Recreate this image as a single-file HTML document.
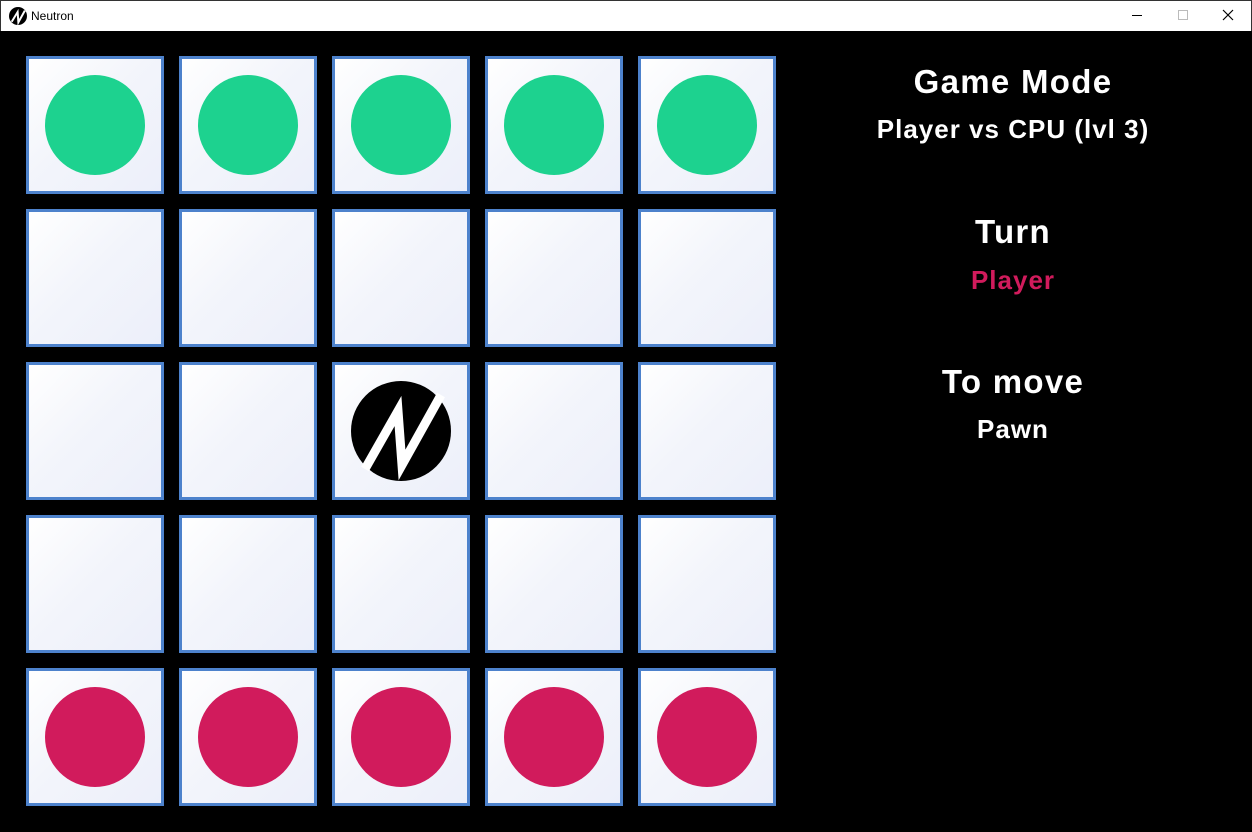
<!DOCTYPE html>
<html><head><meta charset="utf-8"><style>
*{margin:0;padding:0;box-sizing:border-box}
body{width:1252px;height:832px;background:#000;overflow:hidden;position:relative;font-family:"Liberation Sans",sans-serif}
.tb{position:absolute;left:0;top:0;width:1252px;height:31px;background:#fff;border:1px solid #333;border-bottom:none}
.tt{position:absolute;left:30px;top:8px;font-size:12px;color:#000}
.cell{position:absolute;width:138px;height:138px;border:3px solid #4d82cc;background:linear-gradient(135deg,#ffffff 0%,#f3f5fb 45%,#eceffa 100%)}
.dot{position:absolute;left:16px;top:16px;width:100px;height:100px;border-radius:50%}
.g{background:#1dd28f}.p{background:#d11b5c}
.t{position:absolute;left:850px;width:326px;text-align:center;color:#fff;font-weight:bold;line-height:1}
.h{font-size:33px;letter-spacing:1.3px}.s{font-size:26px;letter-spacing:1px}
</style></head><body>
<div class="tb">
<svg style="position:absolute;left:8px;top:6px" width="18" height="18" viewBox="0 0 100 100"><circle cx="50" cy="50" r="50" fill="#000"/><polyline points="15,82 48,28 52,85 88,20" fill="none" stroke="#fff" stroke-width="11"/></svg>
<div class="tt">Neutron</div>
<div style="position:absolute;left:1131px;top:14px;width:10px;height:1px;background:#000"></div>
<div style="position:absolute;left:1177px;top:9px;width:10px;height:10px;border:1px solid #bbb"></div>
<svg style="position:absolute;left:1221px;top:8px" width="12" height="12"><path d="M1 1L11 11M11 1L1 11" stroke="#000" stroke-width="1.2"/></svg>
</div>
<div id="b"></div>
<div class="t h" style="top:65px">Game Mode</div>
<div class="t s" style="top:116px">Player vs CPU (lvl 3)</div>
<div class="t h" style="top:215px">Turn</div>
<div class="t s" style="top:267px;color:#d11b5c">Player</div>
<div class="t h" style="top:365px">To move</div>
<div class="t s" style="top:416px">Pawn</div>
<script>
var h='';
for(var r=0;r<5;r++)for(var c=0;c<5;c++){
var x=26+c*153,y=56+r*153;
var inner='';
if(r==0)inner='<div class="dot g"></div>';
if(r==4)inner='<div class="dot p"></div>';
if(r==2&&c==2)inner='<svg style="position:absolute;left:16px;top:16px" width="100" height="100" viewBox="0 0 100 100"><circle cx="50" cy="50" r="50" fill="#000"/><polyline points="14,88 47,30 51,84 90,14" fill="none" stroke="#fff" stroke-width="9"/></svg>';
h+='<div class="cell" style="left:'+x+'px;top:'+y+'px">'+inner+'</div>';
}
document.getElementById('b').innerHTML=h;
</script>
</body></html>
